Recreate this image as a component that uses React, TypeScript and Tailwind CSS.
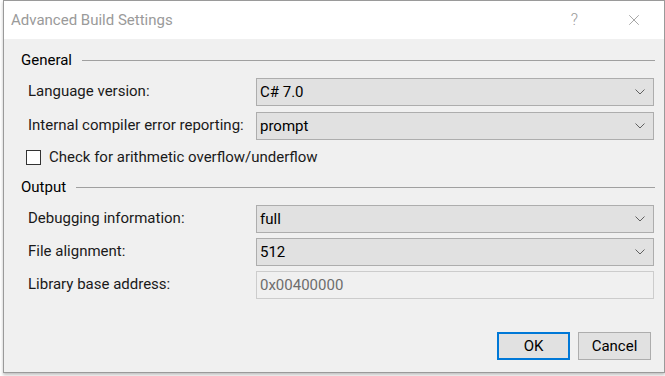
import { X } from 'lucide-react';

const font = { fontFamily: 'Roboto, "Noto Sans", sans-serif' };

function Chevron() {
  return (
    <svg width="10" height="6" viewBox="0 0 10 6" className="text-[#606060] mr-[2px]">
      <path d="M0.5 0.5 L5 5 L9.5 0.5" fill="none" stroke="currentColor" strokeWidth="1" />
    </svg>
  );
}

function Group({ title }: { title: string }) {
  return (
    <div className="flex items-center h-[22px] pl-[17px] pr-[9px]">
      <span className="text-[15px] text-black leading-none whitespace-nowrap">{title}</span>
      <div className="flex-1 h-px bg-[#a0a0a0] ml-[10px]" />
    </div>
  );
}

function SelectRow({ label, value }: { label: string; value: string }) {
  return (
    <div className="flex items-center h-[28px] pl-[24px] pr-[10px]">
      <span className="w-[228px] text-[15px] text-[#1a1a1a] leading-none -mt-[1px] whitespace-nowrap">{label}</span>
      <div className="flex-1 h-[28px] flex items-center justify-between bg-[#e1e1e1] border border-[#adadad] pl-[3px] pr-[6px]">
        <span className="text-[15px] text-black leading-none">{value}</span>
        <Chevron />
      </div>
    </div>
  );
}

export default function App() {
  return (
    <div className="w-[665px] h-[376px] bg-white overflow-hidden" style={font}>
      <div className="ml-[3px] w-[662px] h-[373px] border border-[#9a9a9a] bg-[#f0f0f0] flex flex-col shadow-[0_2px_3px_rgba(0,0,0,0.25)]">
        <div className="h-[38px] bg-white flex items-center shrink-0">
          <span className="pl-[7px] text-[15px] text-[#9a9a9a]">Advanced Build Settings</span>
          <span className="ml-auto mr-[47px] text-[16px] text-[#9a9a9a] font-light">?</span>
          <X size={18} strokeWidth={1} className="text-[#8a8a8a] mr-[21px]" />
        </div>

        <div className="flex flex-col pt-[10px]">
          <Group title="General" />
          <div className="flex flex-col gap-[6px] mt-[7px]">
            <SelectRow label="Language version:" value="C# 7.0" />
            <SelectRow label="Internal compiler error reporting:" value="prompt" />
          </div>
          <div className="flex items-center pl-[22px] mt-[9px] h-[16px]">
            <div className="w-[15px] h-[15px] border border-[#333] bg-white" />
            <span className="ml-[8px] text-[15px] text-[#1a1a1a] leading-none whitespace-nowrap">Check for arithmetic overflow/underflow</span>
          </div>
          <div className="mt-[11px]">
            <Group title="Output" />
          </div>
          <div className="flex flex-col gap-[5px] mt-[7px]">
            <SelectRow label="Debugging information:" value="full" />
            <SelectRow label="File alignment:" value="512" />
            <div className="flex items-center h-[28px] pl-[24px] pr-[10px]">
              <span className="w-[228px] text-[15px] text-[#1a1a1a] leading-none -mt-[1px] whitespace-nowrap">Library base address:</span>
              <div className="flex-1 h-[28px] flex items-center bg-[#f0f0f0] border border-[#cccccc] pl-[3px]">
                <span className="text-[15px] text-[#6d6d6d] leading-none">0x00400000</span>
              </div>
            </div>
          </div>
        </div>

        <div className="flex justify-end gap-[8px] pr-[13px] mt-[33px]">
          <button className="w-[73px] h-[28px] bg-[#e1e1e1] border-2 border-[#0078d7] text-[15px] text-black">OK</button>
          <button className="w-[73px] h-[28px] bg-[#e1e1e1] border border-[#adadad] text-[15px] text-black">Cancel</button>
        </div>
      </div>
    </div>
  );
}
